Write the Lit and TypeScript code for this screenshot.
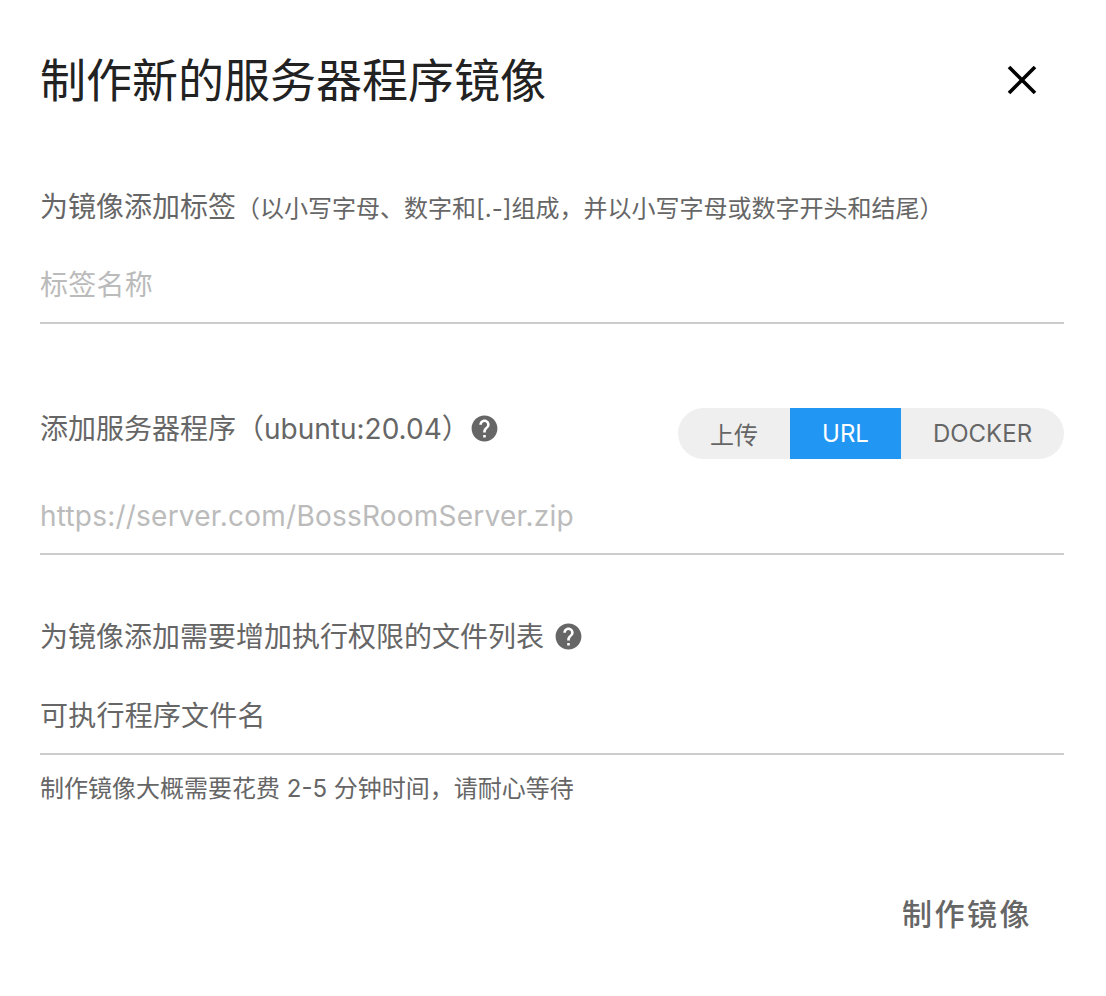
import { LitElement, html, css } from "lit";
import { customElement } from "lit/decorators.js";

const help = html`<svg class="help" viewBox="0 0 24 24" aria-hidden="true"><path fill="#666" d="M12 2C6.48 2 2 6.48 2 12s4.48 10 10 10 10-4.48 10-10S17.52 2 12 2zm1 17h-2v-2h2v2zm2.07-7.75l-.9.92C13.45 12.9 13 13.5 13 15h-2v-.5c0-1.1.45-2.1 1.17-2.83l1.24-1.26c.37-.36.59-.86.59-1.41 0-1.1-.9-2-2-2s-2 .9-2 2H8c0-2.21 1.79-4 4-4s4 1.79 4 4c0 .88-.36 1.68-.93 2.25z"/></svg>`;

@customElement("app-root")
export class AppRoot extends LitElement {
  static styles = css`
    :host {
      display: block;
      width: 1106px;
      height: 996px;
      background: #fff;
      font-family: Inter, "Noto Sans CJK SC", sans-serif;
      color: #666;
      overflow: hidden;
    }
    .dialog {
      box-sizing: border-box;
      height: 996px;
      padding: 0 42px 0 40px;
      display: flex;
      flex-direction: column;
    }
    .head {
      display: flex;
      align-items: center;
      justify-content: space-between;
      height: 160px;
      padding-right: 26px;
    }
    h1 {
      margin: 0;
      font-size: 46px;
      font-weight: 400;
      line-height: 60px;
      color: #222;
    }
    .close { width: 32px; height: 32px; display: block; }
    .label { font-size: 28px; line-height: 40px; }
    .label small { font-size: 24px; line-height: 1; }
    .row .label { padding-top: 1px; }
    .field {
      border-bottom: 2px solid #ccc;
      font-size: 28px;
      line-height: 40px;
      padding-bottom: 17px;
      letter-spacing: 0.22px;
    }
    .placeholder { color: #bbb; }
    .row { display: flex; align-items: center; gap: 9px; }
    .help { width: 31px; height: 31px; display: block; }
    .tight { margin-right: -10px; }
    .spread { justify-content: space-between; align-items: flex-start; }
    .toggle {
      display: flex;
      height: 51px;
      width: 386px;
      border-radius: 26px;
      overflow: hidden;
      background: #efefef;
      font-size: 24px;
    }
    .toggle div { display: flex; align-items: center; justify-content: center; }
    .t1 { width: 112px; }
    .t2 { width: 111px; background: #2196f3; color: #fff; }
    .t3 { flex: 1; }
    .hint { font-size: 24px; line-height: 34px; margin-top: 17px; }
    .foot { display: flex; justify-content: flex-end; margin-top: 86px; padding-right: 32px; }
    .submit { font-size: 30px; font-weight: 500; letter-spacing: 2.5px; line-height: 44px; }
    .s1 { margin-top: 27px; }
    .f1 { margin-top: 38px; }
    .s2 { margin-top: 84px; }
    .f2 { margin-top: 37px; }
    .s3 { margin-top: 61px; }
    .f3 { margin-top: 39px; }
  `;

  render() {
    return html`<div class="dialog">
      <div class="head">
        <h1>制作新的服务器程序镜像</h1>
        <svg class="close" viewBox="0 0 32 32" aria-hidden="true"><path d="M3 3L29 29M29 3L3 29" stroke="#000" stroke-width="3.6" fill="none"/></svg>
      </div>
      <div class="label s1">为镜像添加标签<small>（以小写字母、数字和[.-]组成，并以小写字母或数字开头和结尾）</small></div>
      <div class="field placeholder f1">标签名称</div>
      <div class="row spread s2">
        <div class="row"><span class="label tight">添加服务器程序（ubuntu:20.04）</span>${help}</div>
        <div class="toggle"><div class="t1">上传</div><div class="t2">URL</div><div class="t3">DOCKER</div></div>
      </div>
      <div class="field placeholder f2">https://server.com/BossRoomServer.zip</div>
      <div class="row s3"><span class="label">为镜像添加需要增加执行权限的文件列表</span>${help}</div>
      <div class="field f3">可执行程序文件名</div>
      <div class="hint">制作镜像大概需要花费 2-5 分钟时间，请耐心等待</div>
      <div class="foot"><div class="submit">制作镜像</div></div>
    </div>`;
  }
}
